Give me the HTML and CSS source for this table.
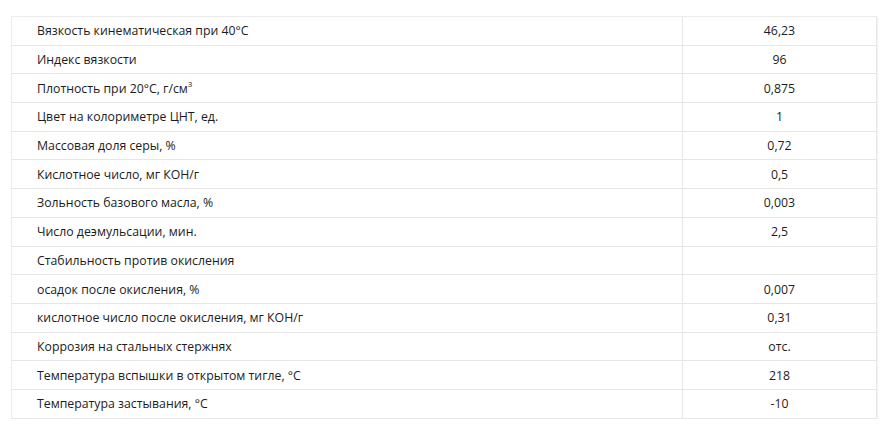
FILE: index.html
```html
<!DOCTYPE html>
<html lang="ru">
<head>
<meta charset="utf-8">
<link rel="stylesheet" href="styles.css">
</head>
<body>
<div class="spec">
  <div class="row"><div class="name">Вязкость кинематическая при 40°С</div><div class="val">46,23</div></div>
  <div class="row"><div class="name">Индекс вязкости</div><div class="val">96</div></div>
  <div class="row"><div class="name">Плотность при 20°С, г/см<sup>3</sup></div><div class="val">0,875</div></div>
  <div class="row"><div class="name">Цвет на колориметре ЦНТ, ед.</div><div class="val">1</div></div>
  <div class="row"><div class="name">Массовая доля серы, %</div><div class="val">0,72</div></div>
  <div class="row"><div class="name">Кислотное число, мг КОН/г</div><div class="val">0,5</div></div>
  <div class="row"><div class="name">Зольность базового масла, %</div><div class="val">0,003</div></div>
  <div class="row"><div class="name">Число деэмульсации, мин.</div><div class="val">2,5</div></div>
  <div class="row"><div class="name">Стабильность против окисления</div><div class="val"></div></div>
  <div class="row"><div class="name">осадок после окисления, %</div><div class="val">0,007</div></div>
  <div class="row"><div class="name">кислотное число после окисления, мг КОН/г</div><div class="val">0,31</div></div>
  <div class="row"><div class="name">Коррозия на стальных стержнях</div><div class="val">отс.</div></div>
  <div class="row"><div class="name">Температура вспышки в открытом тигле, °С</div><div class="val">218</div></div>
  <div class="row"><div class="name">Температура застывания, °С</div><div class="val">-10</div></div>
</div>
</body>
</html>
```
FILE: styles.css
```css
html, body {
  margin: 0;
  padding: 0;
  background: #ffffff;
}
body {
  padding: 16px 9px 0 11px;
  font-family: "Open Sans", "DejaVu Sans", sans-serif;
  font-size: 12.3px;
  color: #1c1c1c;
}
.spec {
  width: 864px;
  border-top: 1px solid #ebebeb;
  border-left: 1px solid #ebebeb;
  border-right: 1px solid #e6e6e6;
  box-shadow: 1px 1px 2px rgba(0,0,0,0.06);
}
.row {
  display: flex;
  height: 28.7px;
  box-sizing: border-box;
  border-bottom: 1px solid #e6e6e6;
}
.name {
  width: 671px;
  box-sizing: border-box;
  padding-left: 25px;
  display: flex;
  align-items: center;
  border-right: 1px solid #e6e6e6;
}
.val {
  flex: 1;
  display: flex;
  align-items: center;
  justify-content: center;
}
sup {
  font-size: 8px;
  line-height: 1;
  position: relative;
  top: -4px;
}
```
